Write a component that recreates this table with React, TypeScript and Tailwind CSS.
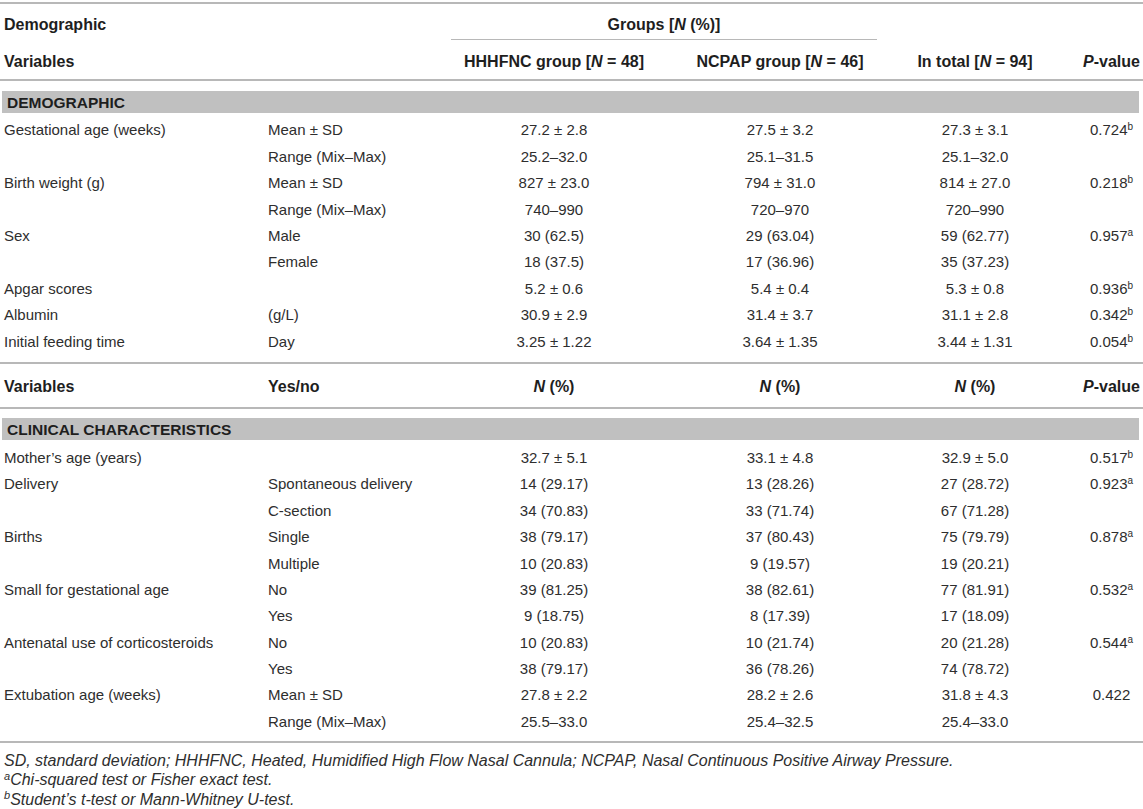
import React from "react";

type Row = {
  label?: string;
  sub?: string;
  a: string;
  b: string;
  total: string;
  p?: string;
  sup?: string;
};

const demographicRows: Row[] = [
  { label: "Gestational age (weeks)", sub: "Mean ± SD", a: "27.2 ± 2.8", b: "27.5 ± 3.2", total: "27.3 ± 3.1", p: "0.724", sup: "b" },
  { sub: "Range (Mix–Max)", a: "25.2–32.0", b: "25.1–31.5", total: "25.1–32.0" },
  { label: "Birth weight (g)", sub: "Mean ± SD", a: "827 ± 23.0", b: "794 ± 31.0", total: "814 ± 27.0", p: "0.218", sup: "b" },
  { sub: "Range (Mix–Max)", a: "740–990", b: "720–970", total: "720–990" },
  { label: "Sex", sub: "Male", a: "30 (62.5)", b: "29 (63.04)", total: "59 (62.77)", p: "0.957", sup: "a" },
  { sub: "Female", a: "18 (37.5)", b: "17 (36.96)", total: "35 (37.23)" },
  { label: "Apgar scores", a: "5.2 ± 0.6", b: "5.4 ± 0.4", total: "5.3 ± 0.8", p: "0.936", sup: "b" },
  { label: "Albumin", sub: "(g/L)", a: "30.9 ± 2.9", b: "31.4 ± 3.7", total: "31.1 ± 2.8", p: "0.342", sup: "b" },
  { label: "Initial feeding time", sub: "Day", a: "3.25 ± 1.22", b: "3.64 ± 1.35", total: "3.44 ± 1.31", p: "0.054", sup: "b" },
];

const clinicalRows: Row[] = [
  { label: "Mother’s age (years)", a: "32.7 ± 5.1", b: "33.1 ± 4.8", total: "32.9 ± 5.0", p: "0.517", sup: "b" },
  { label: "Delivery", sub: "Spontaneous delivery", a: "14 (29.17)", b: "13 (28.26)", total: "27 (28.72)", p: "0.923", sup: "a" },
  { sub: "C-section", a: "34 (70.83)", b: "33 (71.74)", total: "67 (71.28)" },
  { label: "Births", sub: "Single", a: "38 (79.17)", b: "37 (80.43)", total: "75 (79.79)", p: "0.878", sup: "a" },
  { sub: "Multiple", a: "10 (20.83)", b: "9 (19.57)", total: "19 (20.21)" },
  { label: "Small for gestational age", sub: "No", a: "39 (81.25)", b: "38 (82.61)", total: "77 (81.91)", p: "0.532", sup: "a" },
  { sub: "Yes", a: "9 (18.75)", b: "8 (17.39)", total: "17 (18.09)" },
  { label: "Antenatal use of corticosteroids", sub: "No", a: "10 (20.83)", b: "10 (21.74)", total: "20 (21.28)", p: "0.544", sup: "a" },
  { sub: "Yes", a: "38 (79.17)", b: "36 (78.26)", total: "74 (78.72)" },
  { label: "Extubation age (weeks)", sub: "Mean ± SD", a: "27.8 ± 2.2", b: "28.2 ± 2.6", total: "31.8 ± 4.3", p: "0.422" },
  { sub: "Range (Mix–Max)", a: "25.5–33.0", b: "25.4–32.5", total: "25.4–33.0" },
];

const cols = "grid grid-cols-[268px_183px_206px_246px_144px_96px]";

function DataRow({ row }: { row: Row }) {
  return (
    <div className={`${cols} h-[26.4px] items-center pt-[3px]`}>
      <div className="pl-[4px] whitespace-nowrap">{row.label}</div>
      <div className="whitespace-nowrap">{row.sub}</div>
      <div className="text-center">{row.a}</div>
      <div className="text-center">{row.b}</div>
      <div className="text-center">{row.total}</div>
      <div className="text-center pl-[33px] whitespace-nowrap">
        {row.p}
        {row.sup && <sup className="text-[10px]">{row.sup}</sup>}
      </div>
    </div>
  );
}

function Band({ title }: { title: string }) {
  return (
    <div className="ml-[2px] mr-[4px] h-[22px] bg-[#c0c0c0] flex items-center pt-[2px] pl-[5px] font-bold text-[15.5px] text-[#1e1e1e]">
      {title}
    </div>
  );
}

export default function App() {
  return (
    <div
      className="w-[1143px] h-[809px] bg-white text-[15px] text-[#2e2e2e] overflow-hidden"
      style={{ fontFamily: '"Liberation Sans", Arial, sans-serif' }}
    >
      <div className="mt-[2px] border-t-2 border-[#b8b8b8]" />

      {/* Header */}
      <div className={`${cols} h-[35px] items-center pt-[6px] font-bold text-[16px] text-[#1e1e1e]`}>
        <div className="pl-[4px]">Demographic</div>
        <div />
        <div className="col-span-2">
          <div className="w-[426px] text-center">
            Groups [<i>N</i> (%)]
          </div>
        </div>
        <div />
        <div />
      </div>
      <div className={cols}>
        <div />
        <div />
        <div className="col-span-2 w-[426px] border-t border-[#b8b8b8]" />
      </div>
      <div className={`${cols} h-[39px] items-center pt-[4px] font-bold text-[16px] text-[#1e1e1e]`}>
        <div className="pl-[4px]">Variables</div>
        <div />
        <div className="text-center whitespace-nowrap">
          HHHFNC group [<i>N</i> = 48]
        </div>
        <div className="text-center whitespace-nowrap">
          NCPAP group [<i>N</i> = 46]
        </div>
        <div className="text-center whitespace-nowrap">
          In total [<i>N</i> = 94]
        </div>
        <div className="text-center pl-[33px] whitespace-nowrap">
          <i>P</i>-value
        </div>
      </div>
      <div className="border-t-2 border-[#b8b8b8]" />

      {/* Demographic */}
      <div className="mt-[10px]">
        <Band title="DEMOGRAPHIC" />
      </div>
      <div className="mt-[3px]">
        {demographicRows.map((r, i) => (
          <DataRow key={i} row={r} />
        ))}
      </div>

      <div className="mt-[8px] border-t-2 border-[#b8b8b8]" />
      <div className={`${cols} h-[43px] items-center pt-[3px] font-bold text-[16px] text-[#1e1e1e]`}>
        <div className="pl-[4px]">Variables</div>
        <div>Yes/no</div>
        <div className="text-center">
          <i>N</i> (%)
        </div>
        <div className="text-center">
          <i>N</i> (%)
        </div>
        <div className="text-center">
          <i>N</i> (%)
        </div>
        <div className="text-center pl-[33px] whitespace-nowrap">
          <i>P</i>-value
        </div>
      </div>
      <div className="border-t-2 border-[#b8b8b8]" />

      {/* Clinical characteristics */}
      <div className="mt-[9px]">
        <Band title="CLINICAL CHARACTERISTICS" />
      </div>
      <div className="mt-[4px]">
        {clinicalRows.map((r, i) => (
          <DataRow key={i} row={r} />
        ))}
      </div>

      <div className="mt-[7px] border-t-2 border-[#b8b8b8]" />

      {/* Footnotes */}
      <div className="mt-[8px] pl-[4px] italic text-[16px] leading-[19.5px] text-[#2e2e2e]">
        <p className="whitespace-nowrap">
          SD, standard deviation; HHHFNC, Heated, Humidified High Flow Nasal Cannula; NCPAP, Nasal Continuous Positive
          Airway Pressure.
        </p>
        <p>
          <sup className="text-[11px]">a</sup>Chi-squared test or Fisher exact test.
        </p>
        <p>
          <sup className="text-[11px]">b</sup>Student’s t-test or Mann-Whitney U-test.
        </p>
      </div>
    </div>
  );
}
